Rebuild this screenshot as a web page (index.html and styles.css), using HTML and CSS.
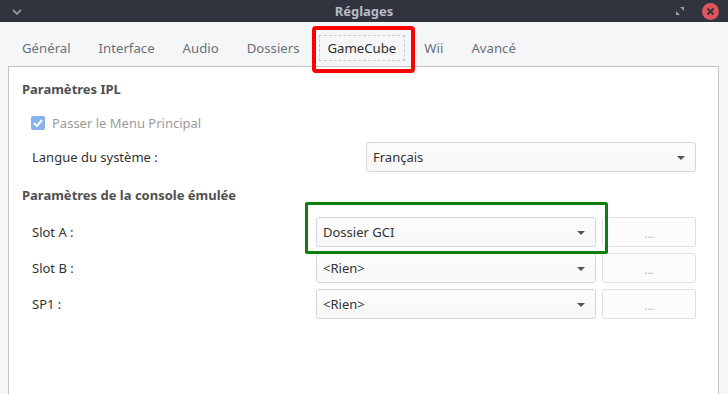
FILE: index.html
```html
<!DOCTYPE html>
<html lang="fr">
<head>
<meta charset="utf-8">
<title>Réglages</title>
<link rel="stylesheet" href="styles.css">
</head>
<body>
<div class="window">
  <header class="titlebar">
    <span class="tb-left">
      <svg width="10" height="6" viewBox="0 0 10 6"><path d="M1 1 L5 5 L9 1" fill="none" stroke="#8e939c" stroke-width="1.8"/></svg>
    </span>
    <span class="title">Réglages</span>
    <span class="tb-right">
      <svg class="max" width="8" height="8" viewBox="0 0 8 8"><path d="M4 0 H8 V4 Z M0 4 V8 H4 Z" fill="#9aa0aa"/></svg>
      <svg class="close" width="17" height="17" viewBox="0 0 17 17"><circle cx="8.5" cy="8.5" r="8.5" fill="#e0545b"/><path d="M5.5 5.5 L11.5 11.5 M11.5 5.5 L5.5 11.5" stroke="#2f343f" stroke-width="2"/></svg>
    </span>
  </header>
  <nav class="tabs">
    <div class="tab"><span>Général</span></div>
    <div class="tab"><span>Interface</span></div>
    <div class="tab"><span>Audio</span></div>
    <div class="tab"><span>Dossiers</span></div>
    <div class="tab active"><span>GameCube</span></div>
    <div class="tab"><span>Wii</span></div>
    <div class="tab"><span>Avancé</span></div>
  </nav>
  <main class="pane">
    <section class="group">
      <h2>Paramètres IPL</h2>
      <div class="check-row">
        <span class="checkbox"><svg width="10" height="8" viewBox="0 0 10 8"><path d="M1 4 L4 7 L9 1" fill="none" stroke="#fff" stroke-width="2"/></svg></span>
        <span class="check-label">Passer le Menu Principal</span>
      </div>
      <div class="row lang">
        <span class="label">Langue du système :</span>
        <div class="combo wide"><span>Français</span><i class="arrow"></i></div>
      </div>
    </section>
    <section class="group second">
      <h2>Paramètres de la console émulée</h2>
      <div class="row slot">
        <span class="label">Slot A :</span>
        <div class="combo"><span>Dossier GCI</span><i class="arrow"></i></div>
        <div class="btn">...</div>
      </div>
      <div class="row slot">
        <span class="label">Slot B :</span>
        <div class="combo"><span>&lt;Rien&gt;</span><i class="arrow"></i></div>
        <div class="btn">...</div>
      </div>
      <div class="row slot">
        <span class="label">SP1 :</span>
        <div class="combo"><span>&lt;Rien&gt;</span><i class="arrow"></i></div>
        <div class="btn">...</div>
      </div>
    </section>
  </main>
  <div class="annot red"></div>
  <div class="annot green"></div>
</div>
</body>
</html>
```
FILE: styles.css
```css
html, body {
  margin: 0;
  padding: 0;
}
body {
  background: #f5f6f7;
  font-family: "Noto Sans", "DejaVu Sans", sans-serif;
  color: #323232;
  width: 728px;
  height: 394px;
  overflow: hidden;
}
.window {
  position: relative;
  width: 728px;
  height: 394px;
  display: flex;
  flex-direction: column;
}
.titlebar {
  height: 22px;
  background: #2f343f;
  display: grid;
  grid-template-columns: 1fr auto 1fr;
  align-items: center;
  flex: none;
}
.tb-left, .tb-right {
  display: flex;
  align-items: center;
}
.tb-left {
  padding-left: 12px;
}
.tb-right {
  justify-content: flex-end;
  gap: 18px;
  padding-right: 9px;
}
.tb-left svg { display: block; margin-top: 1px; }
.title {
  font-weight: bold;
  font-size: 13px;
  color: #b7bcc6;
  line-height: 22px;
}
.tabs {
  display: flex;
  padding: 13px 0 4px 8px;
  height: 26px;
  flex: none;
}
.tab {
  padding: 0 5px;
}
.tab span {
  display: block;
  padding: 0 8px;
  line-height: 24px;
  height: 24px;
  font-size: 13.2px;
  color: #6c6f77;
  border: 1px dashed transparent;
}
.tab.active span {
  color: #2f2f2f;
  border-color: #cbcbcb;
}
.pane {
  flex: 1;
  margin: 1px 9px 0 8px;
  background: #fff;
  border: 1px solid #c4c4c4;
  border-bottom: none;
  padding: 13px 22px 0 13px;
}
.group h2 {
  margin: 0;
  font-size: 13px;
  line-height: 18px;
  font-weight: bold;
  color: #505050;
}
.check-row {
  display: flex;
  align-items: center;
  height: 24px;
  margin: 13px 0 0 9px;
}
.checkbox {
  width: 14px;
  height: 14px;
  border-radius: 2px;
  background: #86b2ea;
  display: flex;
  align-items: center;
  justify-content: center;
}
.check-label {
  margin-left: 7px;
  font-size: 13px;
  color: #9b9b9b;
}
.row {
  display: flex;
  align-items: center;
  margin-left: 10px;
}
.row.lang {
  margin-top: 7px;
}
.label {
  flex: 1;
  font-size: 13px;
  color: #323232;
}
.combo {
  height: 28px;
  border: 1px solid #d3d7de;
  border-radius: 3px;
  background: linear-gradient(#fcfcfc, #f8f8f9);
  display: flex;
  align-items: center;
  justify-content: space-between;
  padding: 0 10px 0 6px;
  font-size: 13px;
  color: #323232;
  width: 262px;
}
.combo.wide {
  width: 312px;
}
.arrow {
  width: 0;
  height: 0;
  border-left: 4px solid transparent;
  border-right: 4px solid transparent;
  border-top: 4px solid #555;
  margin-top: 1px;
}
.second {
  margin-top: 14px;
}
.row.slot {
  margin-top: 6px;
}
.second h2 + .row.slot {
  margin-top: 13px;
}
.btn {
  margin-left: 6px;
  width: 94px;
  height: 30px;
  box-sizing: border-box;
  border: 1px solid #dcdfe4;
  border-radius: 3px;
  background: #fcfcfd;
  display: flex;
  align-items: center;
  justify-content: center;
  font-size: 11px;
  color: #aaa;
  padding-top: 2px;
}
.annot {
  position: absolute;
  box-sizing: border-box;
}
.annot.red {
  left: 312px;
  top: 26px;
  width: 103px;
  height: 47px;
  border: 4px solid #ff0000;
  border-radius: 4px;
}
.annot.green {
  left: 305px;
  top: 202px;
  width: 303px;
  height: 52px;
  border: 3px solid #0a800a;
  border-radius: 2px;
}
```
